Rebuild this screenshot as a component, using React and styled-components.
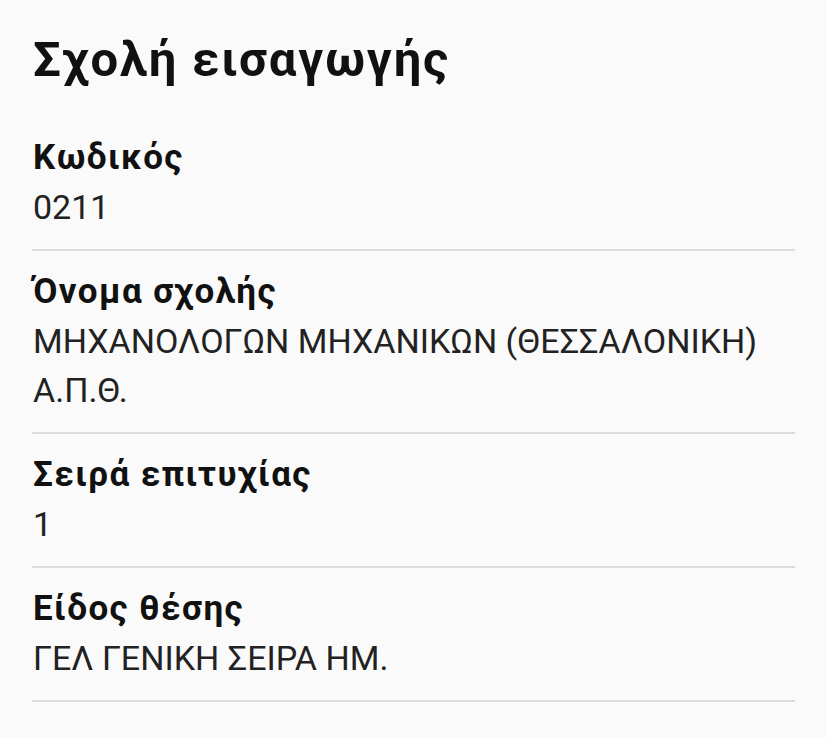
import styled, { createGlobalStyle } from 'styled-components';

const GlobalStyle = createGlobalStyle`
  body {
    margin: 0;
    background: #fafafa;
    font-family: Roboto, 'Noto Sans', sans-serif;
  }
`;

const Page = styled.main`
  padding: 22px 32px 0 32px;
  display: flex;
  flex-direction: column;
`;

const Title = styled.h1`
  margin: 0 0 40px 1px;
  font-size: 49px;
  line-height: 76px;
  font-weight: 700;
  letter-spacing: 1.8px;
  color: #111;
`;

const Section = styled.section`
  display: flex;
  flex-direction: column;
  gap: 5px;
  padding: 21px 0 17px 1px;
  border-bottom: 2px solid #dcdcdc;

  &:first-of-type {
    padding-top: 0;
  }
`;

const Label = styled.h2`
  margin: 0;
  font-size: 35px;
  line-height: 40px;
  font-weight: 700;
  letter-spacing: 1.4px;
  color: #111;
`;

const Value = styled.p`
  margin: 0;
  font-size: 34px;
  line-height: 49px;
  font-weight: 400;
  color: #222;
`;

const fields = [
  { label: 'Κωδικός', value: '0211' },
  { label: 'Όνομα σχολής', value: 'ΜΗΧΑΝΟΛΟΓΩΝ ΜΗΧΑΝΙΚΩΝ (ΘΕΣΣΑΛΟΝΙΚΗ) Α.Π.Θ.' },
  { label: 'Σειρά επιτυχίας', value: '1' },
  { label: 'Είδος θέσης', value: 'ΓΕΛ ΓΕΝΙΚΗ ΣΕΙΡΑ ΗΜ.' },
];

function App() {
  return (
    <>
      <GlobalStyle />
      <Page>
        <Title>Σχολή εισαγωγής</Title>
        {fields.map((f) => (
          <Section key={f.label}>
            <Label>{f.label}</Label>
            <Value>{f.value}</Value>
          </Section>
        ))}
      </Page>
    </>
  );
}

export default App;
